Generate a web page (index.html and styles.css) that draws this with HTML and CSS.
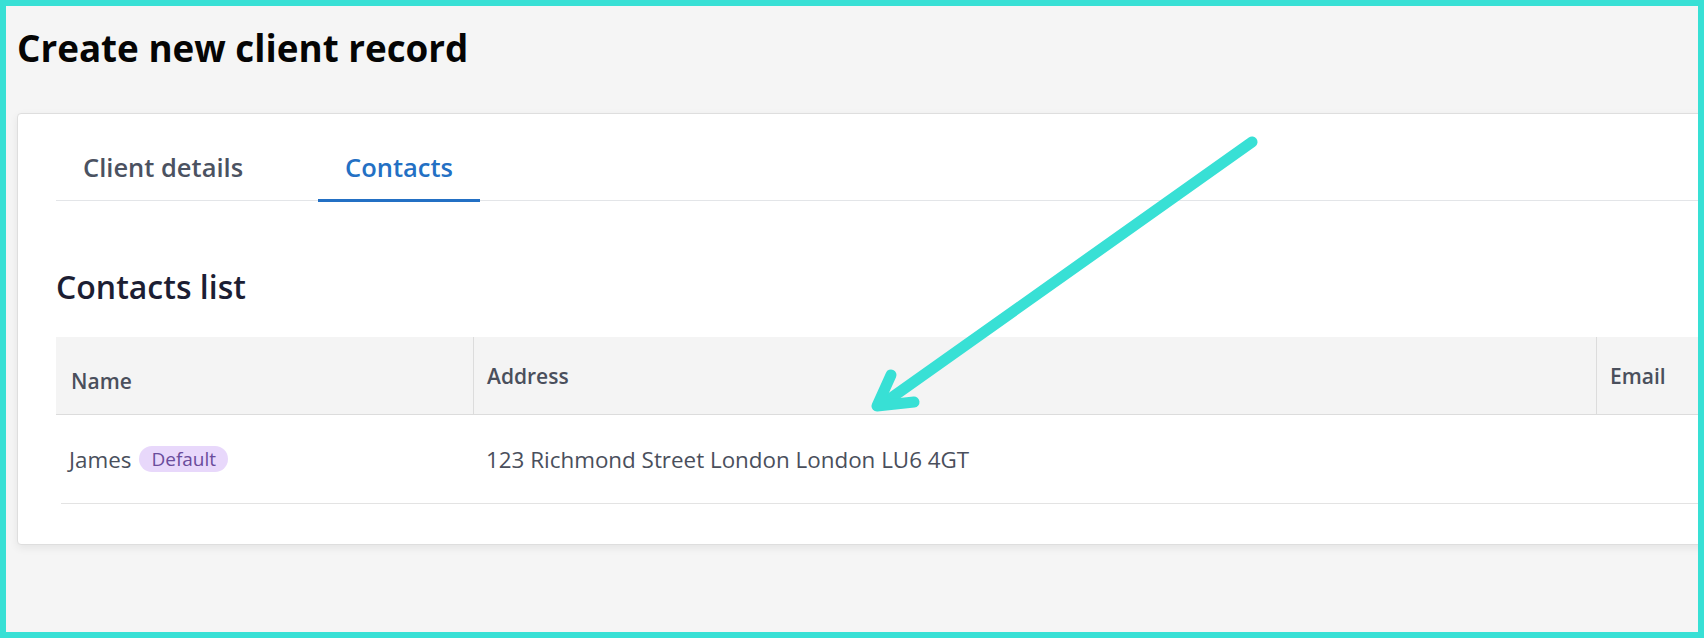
FILE: index.html
```html
<!DOCTYPE html>
<html lang="en">
<head>
<meta charset="utf-8">
<title>Create new client record</title>
<link rel="stylesheet" href="styles.css">
</head>
<body>
<div class="frame">
  <div class="page">
    <h1 class="page-title">Create new client record</h1>
    <section class="card">
      <nav class="tabs">
        <div class="tab">Client details</div>
        <div class="tab tab-active">Contacts</div>
      </nav>
      <h2 class="section-title">Contacts list</h2>
      <div class="table">
        <div class="thead">
          <div class="th th-name">Name</div>
          <div class="th th-address">Address</div>
          <div class="th th-email">Email</div>
        </div>
        <div class="trow">
          <div class="td td-name">James <span class="badge">Default</span></div>
          <div class="td td-address">123 Richmond Street London London LU6 4GT</div>
          <div class="td td-email"></div>
        </div>
      </div>
    </section>
  </div>
  <svg class="annotation" width="1704" height="638" viewBox="0 0 1704 638" aria-hidden="true">
    <g fill="none" stroke="#38e0d5" stroke-width="11" stroke-linecap="round" stroke-linejoin="round">
      <line x1="1252" y1="142" x2="884" y2="403"/>
      <polyline points="891,375 877,406 914,402"/>
    </g>
  </svg>
</div>
</body>
</html>
```
FILE: styles.css
```css
* { box-sizing: border-box; }
html, body { margin: 0; padding: 0; }
body {
  font-family: "Open Sans", "Noto Sans", "Liberation Sans", sans-serif;
  background: #f5f5f5;
}
.frame {
  position: relative;
  width: 1704px;
  height: 638px;
  border: 6px solid #38e0d5;
  background: #f5f5f5;
  overflow: hidden;
}
.annotation {
  position: absolute;
  left: -6px;
  top: -6px;
  pointer-events: none;
}
.page {
  padding: 20px 0 0 11px;
}
.page-title {
  margin: 0;
  font-size: 36.8px;
  line-height: 44px;
  font-weight: 700;
  color: #050505;
}
.card {
  margin-top: 43px;
  width: 1720px;
  background: #fff;
  border: 1px solid #dedede;
  border-radius: 4px;
  box-shadow: 0 3px 8px rgba(0, 0, 0, 0.07);
  padding: 21px 0 40px 38px;
}
.tabs {
  display: flex;
  gap: 48px;
  border-bottom: 1px solid #e3e5e8;
}
.tab {
  padding: 14px 27px 14px;
  font-size: 25.5px;
  line-height: 36px;
  font-weight: 600;
  color: #4b5261;
  border-bottom: 3px solid transparent;
  margin-bottom: -2px;
}
.tab-active {
  color: #2370c4;
  border-bottom-color: #2370c4;
}
.section-title {
  margin: 66px 0 0;
  font-size: 32px;
  line-height: 40px;
  font-weight: 600;
  color: #1c1e33;
}
.table {
  margin-top: 30px;
}
.thead {
  display: grid;
  grid-template-columns: 417px 1123px 1fr;
  height: 78px;
  background: #f4f4f4;
  border-bottom: 1px solid #dcdcdc;
}
.th {
  font-size: 21px;
  font-weight: 600;
  color: #4a4f5c;
  display: flex;
  align-items: center;
  padding: 0 13px;
}
.th + .th {
  border-left: 1px solid #dcdcdc;
}
.th-name {
  padding: 10px 15px 0;
}
.trow {
  display: grid;
  grid-template-columns: 412px 1123px 1fr;
  margin-left: 5px;
  height: 89px;
  border-bottom: 1px solid #e3e3e3;
  align-items: center;
}
.td {
  font-size: 22.4px;
  color: #4a4f5c;
  display: flex;
  align-items: center;
}
.td-name {
  padding-left: 8px;
  gap: 8px;
}
.td-address {
  padding-left: 13px;
}
.badge {
  display: inline-block;
  background: #e8d8fb;
  color: #6a4c9c;
  font-size: 19px;
  line-height: 26px;
  padding: 0 12px;
  border-radius: 13px;
}
```
